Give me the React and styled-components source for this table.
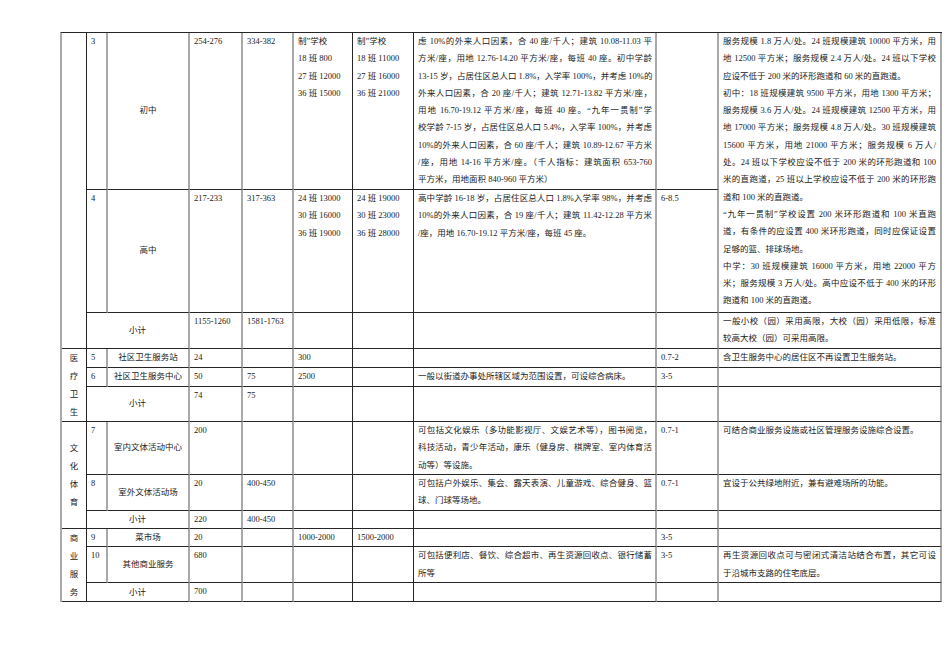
import React from 'react';
import styled, { createGlobalStyle } from 'styled-components';

const GlobalStyle = createGlobalStyle`
  html, body {
    margin: 0;
    padding: 0;
    background: #ffffff;
  }
`;

const SOFT = '2px solid #a9a9a9';
const HARD = '1px solid #262626';

const Sheet = styled.table`
  border-collapse: separate;
  border-spacing: 0;
  table-layout: fixed;
  width: 882px;
  margin: 32px 0 0 60px;
  border-top: ${HARD};
  border-left: ${SOFT};
  font-family: "Liberation Serif", "Noto Sans CJK SC", serif;
  font-size: 8.5px;
  line-height: 17.3px;
  color: #222;
`;

const Col = styled.col`
  width: ${p => p.$w}px;
`;

const Row = styled.tr`
  height: ${p => p.$h}px;
`;

// 大类（竖排）
const Group = styled.td`
  border-right: ${HARD};
  border-bottom: ${HARD};
  padding: 0;
  text-align: center;
  vertical-align: middle;
`;

const Glyph = styled.div`
  line-height: 18px;
`;

const Num = styled.td`
  border-right: ${SOFT};
  border-bottom: ${HARD};
  padding: 0 2px 0 4px;
  vertical-align: top;
`;

const Item = styled.td`
  border-right: ${SOFT};
  border-bottom: ${HARD};
  padding: 0 2px;
  text-align: center;
  vertical-align: middle;
  white-space: nowrap;
`;

const Figure = styled.td`
  border-right: ${p => (p.$soft ? SOFT : HARD)};
  border-bottom: ${HARD};
  padding: 0 2px 0 4px;
  vertical-align: top;
  white-space: nowrap;
`;

const Note = styled.td`
  border-right: ${SOFT};
  border-bottom: ${HARD};
  padding: 0 3px 0 4px;
  vertical-align: top;
`;

const Ratio = styled.td`
  border-right: ${SOFT};
  border-bottom: ${HARD};
  padding: 0 2px 0 4px;
  vertical-align: top;
`;

const Remark = styled.td`
  border-right: ${SOFT};
  border-bottom: ${HARD};
  padding: 0 4px 0 4px;
  vertical-align: top;
`;

const Line = styled.div`
  white-space: nowrap;
  text-align: ${p => (p.$fill ? 'justify' : 'left')};
  text-align-last: ${p => (p.$fill ? 'justify' : 'auto')};
`;

const Text = ({ paras }) =>
  paras.map((p, i) =>
    p.map((l, j) => (
      <Line key={i + '-' + j} $fill={j < p.length - 1}>
        {l}
      </Line>
    ))
  );

const Vertical = ({ text, rows }) => (
  <Group rowSpan={rows}>
    {text.split('').map((c, i) => (
      <Glyph key={i}>{c}</Glyph>
    ))}
  </Group>
);

const widths = [25, 21, 82, 53, 51, 59, 61, 243, 62, 223];

const schoolRemark = [
  [
    '服务规模 1.8 万人/处。24 班规模建筑 10000 平方米，用',
    '地 12500 平方米；服务规模 2.4 万人/处。24 班以下学校',
    '应设不低于 200 米的环形跑道和 60 米的直跑道。',
  ],
  [
    '初中：18 班规模建筑 9500 平方米，用地 1300 平方米；',
    '服务规模 3.6 万人/处。24 班规模建筑 12500 平方米，用',
    '地 17000 平方米；服务规模 4.8 万人/处。30 班规模建筑',
    '15600 平方米，用地 21000 平方米；服务规模 6 万人/',
    '处。24 班以下学校应设不低于 200 米的环形跑道和 100',
    '米的直跑道，25 班以上学校应设不低于 200 米的环形跑',
    '道和 100 米的直跑道。',
  ],
  [
    '“九年一贯制”学校设置 200 米环形跑道和 100 米直跑',
    '道，有条件的应设置 400 米环形跑道，同时应保证设置',
    '足够的篮、排球场地。',
  ],
  [
    '中学：30 班规模建筑 16000 平方米，用地 22000 平方',
    '米；服务规模 3 万人/处。高中应设不低于 400 米的环形',
    '跑道和 100 米的直跑道。',
  ],
];

const juniorNote = [
  [
    '虑 10%的外来人口因素，合 40 座/千人；建筑 10.08-11.03 平',
    '方米/座，用地 12.76-14.20 平方米/座，每班 40 座。初中学龄',
    '13-15 岁，占居住区总人口 1.8%，入学率 100%，并考虑 10%的',
    '外来人口因素，合 20 座/千人；建筑 12.71-13.82 平方米/座，',
    '用地 16.70-19.12 平方米/座，每班 40 座。“九年一贯制”学',
    '校学龄 7-15 岁，占居住区总人口 5.4%，入学率 100%，并考虑',
    '10%的外来人口因素，合 60 座/千人；建筑 10.89-12.67 平方米',
    '/座，用地 14-16 平方米/座。（千人指标：建筑面积 653-760',
    '平方米，用地面积 840-960 平方米）',
  ],
];

const seniorNote = [
  [
    '高中学龄 16-18 岁，占居住区总人口 1.8%入学率 98%，并考虑',
    '10%的外来人口因素，合 19 座/千人；建筑 11.42-12.28 平方米',
    '/座，用地 16.70-19.12 平方米/座，每班 45 座。',
  ],
];

const Lines = ({ items }) => items.map((t, i) => <div key={i}>{t}</div>);

export default function App() {
  return (
    <>
      <GlobalStyle />
      <Sheet lang="zh-CN">
        <colgroup>
          {widths.map((w, i) => (
            <Col key={i} $w={w} />
          ))}
        </colgroup>
        <tbody>
          <Row $h={157}>
            <Group rowSpan={3} />
            <Num>3</Num>
            <Item>初中</Item>
            <Figure $soft>254-276</Figure>
            <Figure $soft>334-382</Figure>
            <Figure>
              <Lines items={['制”学校', '18 班 800', '27 班 12000', '36 班 15000']} />
            </Figure>
            <Figure>
              <Lines items={['制”学校', '18 班 11000', '27 班 16000', '36 班 21000']} />
            </Figure>
            <Note>
              <Text paras={juniorNote} />
            </Note>
            <Ratio />
            <Remark rowSpan={2}>
              <Text paras={schoolRemark} />
            </Remark>
          </Row>
          <Row $h={123}>
            <Num>4</Num>
            <Item>高中</Item>
            <Figure $soft>217-233</Figure>
            <Figure $soft>317-363</Figure>
            <Figure>
              <Lines items={['24 班 13000', '30 班 16000', '36 班 19000']} />
            </Figure>
            <Figure>
              <Lines items={['24 班 19000', '30 班 23000', '36 班 28000']} />
            </Figure>
            <Note>
              <Text paras={seniorNote} />
            </Note>
            <Ratio>6-8.5</Ratio>
          </Row>
          <Row $h={36}>
            <Item colSpan={2}>小计</Item>
            <Figure $soft>1155-1260</Figure>
            <Figure $soft>1581-1763</Figure>
            <Figure />
            <Figure />
            <Note />
            <Ratio />
            <Remark>
              <Text
                paras={[['一般小校（园）采用高限，大校（园）采用低限，标准', '较高大校（园）可采用高限。']]}
              />
            </Remark>
          </Row>

          <Row $h={18}>
            <Vertical text="医疗卫生" rows={3} />
            <Num>5</Num>
            <Item>社区卫生服务站</Item>
            <Figure $soft>24</Figure>
            <Figure $soft />
            <Figure>300</Figure>
            <Figure />
            <Note />
            <Ratio>0.7-2</Ratio>
            <Remark>含卫生服务中心的居住区不再设置卫生服务站。</Remark>
          </Row>
          <Row $h={18}>
            <Num>6</Num>
            <Item>社区卫生服务中心</Item>
            <Figure $soft>50</Figure>
            <Figure $soft>75</Figure>
            <Figure>2500</Figure>
            <Figure />
            <Note>一般以街道办事处所辖区域为范围设置，可设综合病床。</Note>
            <Ratio>3-5</Ratio>
            <Remark />
          </Row>
          <Row $h={34}>
            <Item colSpan={2}>小计</Item>
            <Figure $soft>74</Figure>
            <Figure $soft>75</Figure>
            <Figure />
            <Figure />
            <Note />
            <Ratio />
            <Remark />
          </Row>

          <Row $h={53}>
            <Vertical text="文化体育" rows={3} />
            <Num>7</Num>
            <Item>室内文体活动中心</Item>
            <Figure $soft>200</Figure>
            <Figure $soft />
            <Figure />
            <Figure />
            <Note>
              <Text
                paras={[
                  [
                    '可包括文化娱乐（多功能影视厅、文娱艺术等），图书阅览，',
                    '科技活动，青少年活动，康乐（健身房、棋牌室、室内体育活',
                    '动等）等设施。',
                  ],
                ]}
              />
            </Note>
            <Ratio>0.7-1</Ratio>
            <Remark>可结合商业服务设施或社区管理服务设施综合设置。</Remark>
          </Row>
          <Row $h={35}>
            <Num>8</Num>
            <Item>室外文体活动场</Item>
            <Figure $soft>20</Figure>
            <Figure $soft>400-450</Figure>
            <Figure />
            <Figure />
            <Note>
              <Text paras={[['可包括户外娱乐、集会、露天表演、儿童游戏、综合健身、篮', '球、门球等场地。']]} />
            </Note>
            <Ratio>0.7-1</Ratio>
            <Remark>宜设于公共绿地附近，兼有避难场所的功能。</Remark>
          </Row>
          <Row $h={18}>
            <Item colSpan={2}>小计</Item>
            <Figure $soft>220</Figure>
            <Figure $soft>400-450</Figure>
            <Figure />
            <Figure />
            <Note />
            <Ratio />
            <Remark />
          </Row>

          <Row $h={18}>
            <Vertical text="商业服务" rows={3} />
            <Num>9</Num>
            <Item>菜市场</Item>
            <Figure $soft>20</Figure>
            <Figure $soft />
            <Figure>1000-2000</Figure>
            <Figure>1500-2000</Figure>
            <Note />
            <Ratio>3-5</Ratio>
            <Remark />
          </Row>
          <Row $h={36}>
            <Num>10</Num>
            <Item>其他商业服务</Item>
            <Figure $soft>680</Figure>
            <Figure $soft />
            <Figure />
            <Figure />
            <Note>
              <Text paras={[['可包括便利店、餐饮、综合超市、再生资源回收点、银行储蓄', '所等']]} />
            </Note>
            <Ratio>3-5</Ratio>
            <Remark>
              <Text paras={[['再生资源回收点可与密闭式清洁站结合布置，其它可设', '于沿城市支路的住宅底层。']]} />
            </Remark>
          </Row>
          <Row $h={18}>
            <Item colSpan={2}>小计</Item>
            <Figure $soft>700</Figure>
            <Figure $soft />
            <Figure />
            <Figure />
            <Note />
            <Ratio />
            <Remark />
          </Row>
        </tbody>
      </Sheet>
    </>
  );
}
